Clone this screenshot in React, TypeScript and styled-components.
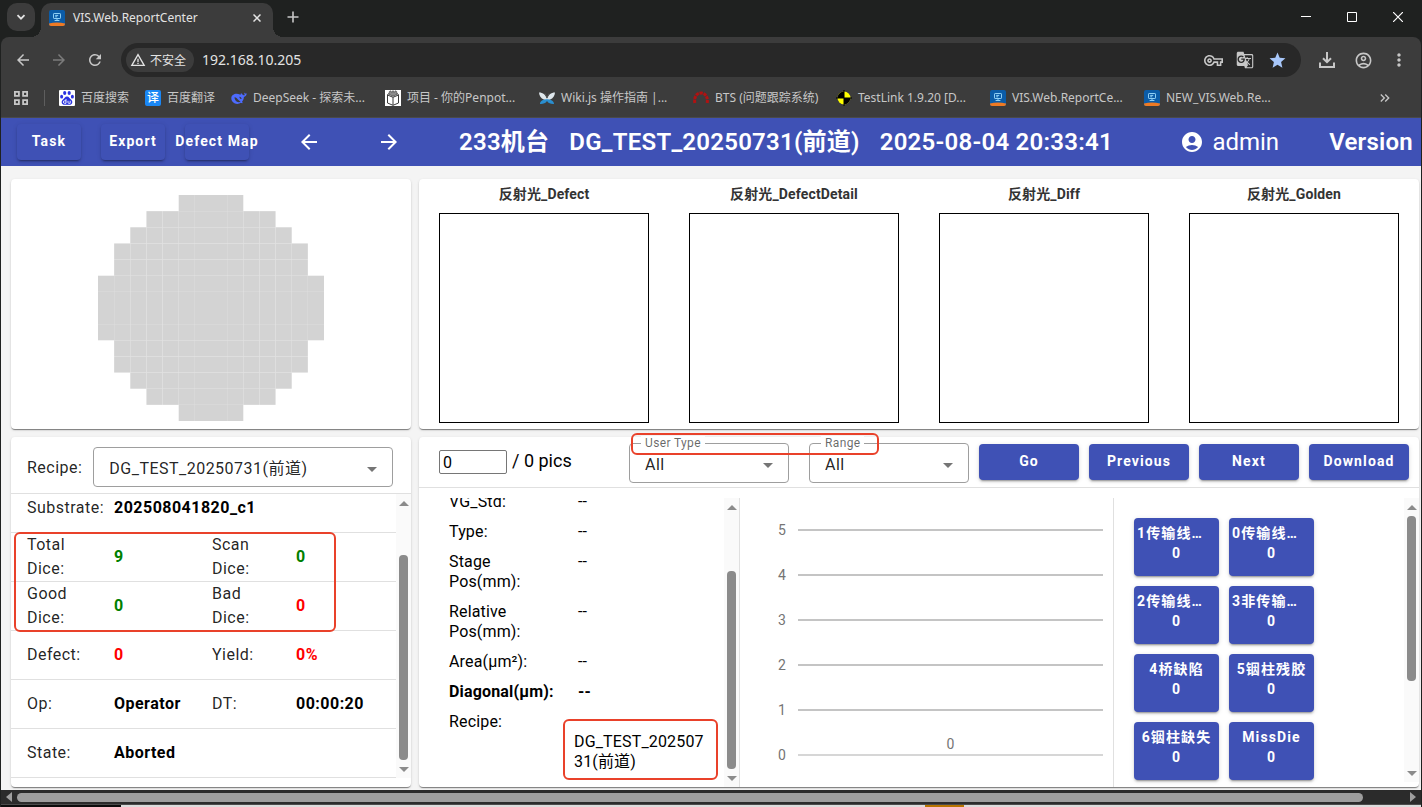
import React from "react";
import styled, { createGlobalStyle, css } from "styled-components";
import {
  MdAccountCircle,
  MdArrowBack,
  MdArrowDropDown,
  MdArrowForward,
  MdGTranslate,
  MdKeyboardDoubleArrowRight,
  MdMoreVert,
  MdOutlineAccountCircle,
  MdOutlineVpnKey,
  MdRefresh,
  MdStar,
  MdWarningAmber,
} from "react-icons/md";

const uiFont = `"Noto Sans", "Noto Sans CJK SC", sans-serif`;
const appFont = `Roboto, "Noto Sans CJK SC", sans-serif`;
const indigo = "#3f51b5";
const markRed = "#e9412a";
const bodySpacing = "0.03em";

const GlobalStyle = createGlobalStyle`
  *, *::before, *::after { box-sizing: border-box; }
  body { margin: 0; background: #232323; font-family: ${appFont}; }
  button, input, select { font-family: inherit; }
  button { cursor: pointer; }
  svg { display: block; flex: none; }
`;

/* ---------- browser window ---------- */

const Browser = styled.div`
  display: flex;
  flex-direction: column;
  min-height: 100vh;
  padding: 0 1px;
  background: #1f2120;
`;

const TabStrip = styled.div`
  display: flex;
  align-items: flex-end;
  height: 37px;
  padding-left: 6px;
  font-family: ${uiFont};
  color: #e3e3e3;
`;

const TabSearch = styled.button`
  display: grid;
  place-items: center;
  width: 28px;
  height: 28px;
  margin: 0 6px 6px 0;
  padding: 0;
  border: 0;
  border-radius: 10px;
  background: #3c3c3c;
  color: inherit;
`;

const Tab = styled.div`
  position: relative;
  display: flex;
  align-items: center;
  gap: 8px;
  width: 232px;
  height: 34px;
  padding: 0 8px 5px;
  border-radius: 10px 10px 0 0;
  background: #3c3c3c;
  font-size: 12px;
  line-height: 16px;

  &::before,
  &::after {
    content: "";
    position: absolute;
    bottom: 0;
    width: 10px;
    height: 10px;
  }
  &::before {
    left: -10px;
    background: radial-gradient(circle at 0 0, transparent 10px, #3c3c3c 10px);
  }
  &::after {
    right: -10px;
    background: radial-gradient(circle at 100% 0, transparent 10px, #3c3c3c 10px);
  }
`;

const TabTitle = styled.span`
  flex: 1;
  white-space: nowrap;
`;

const GlyphButton = styled.button<{ $w?: number; $h?: number; $dim?: boolean }>`
  display: grid;
  place-items: center;
  flex: none;
  width: ${(p) => p.$w ?? 36}px;
  height: ${(p) => p.$h ?? 34}px;
  padding: 0;
  border: 0;
  background: none;
  color: ${(p) => (p.$dim ? "#7b7b7b" : "#c7c7c7")};
`;

const NewTab = styled(GlyphButton)`
  margin: 0 0 3px 2px;
`;

const WindowButtons = styled.div`
  display: flex;
  margin-left: auto;
  align-self: flex-start;
  color: #fff;
`;

const Toolbar = styled.div`
  display: flex;
  align-items: center;
  height: 46px;
  padding: 0 4px;
  border-radius: 8px 8px 0 0;
  background: #3c3c3c;
`;

const AddressBar = styled.div`
  display: flex;
  align-items: center;
  flex: 1;
  height: 34px;
  margin: 0 8px;
  padding: 0 8px 0 5px;
  border-radius: 17px;
  background: #282828;
  font-family: ${uiFont};
`;

const SecurityChip = styled.button`
  display: flex;
  align-items: center;
  gap: 4px;
  height: 24px;
  margin-right: 8px;
  padding: 0 8px 0 4px;
  border: 0;
  border-radius: 12px;
  background: #3c3c3c;
  color: #e3e3e3;
  font-size: 12px;
`;

const AddressInput = styled.input`
  flex: 1;
  min-width: 0;
  padding: 0 0 2px;
  border: 0;
  outline: 0;
  background: none;
  color: #e3e3e3;
  font-size: 14px;
`;

const BookmarksBar = styled.nav`
  display: flex;
  align-items: center;
  height: 35px;
  padding: 0 20px 4px 10px;
  border-bottom: 1px solid #4a4a4a;
  background: #3c3c3c;
  font-family: ${uiFont};
`;

const BookmarkDivider = styled.span`
  width: 1px;
  height: 16px;
  margin: 0 14px 0 13px;
  background: #5e5e5e;
`;

const Bookmark = styled.a<{ $width: number }>`
  display: flex;
  align-items: center;
  gap: 6px;
  flex: none;
  width: ${(p) => p.$width}px;
  margin-right: 16px;
  color: #c7c7c7;
  font-size: 12px;
  line-height: 16px;
  text-decoration: none;
  white-space: nowrap;
`;

const Overflow = styled(GlyphButton)`
  margin-left: auto;
`;

/* ---------- application bar ---------- */

const AppBar = styled.header`
  display: flex;
  align-items: center;
  height: 48px;
  padding: 0 8px 0 16px;
  background: ${indigo};
  color: #fff;
`;

const raised = css`
  border: 0;
  border-radius: 4px;
  background: ${indigo};
  color: #fff;
  font-size: 14px;
  font-weight: 700;
  letter-spacing: 0.08em;
  box-shadow: 0 3px 1px -2px rgba(0, 0, 0, 0.2), 0 2px 2px rgba(0, 0, 0, 0.14),
    0 1px 5px rgba(0, 0, 0, 0.12);
`;

const BarButton = styled.button`
  ${raised}
  display: flex;
  align-items: center;
  justify-content: center;
  flex: none;
  width: 64px;
  height: 36px;
  margin-right: 20px;
  padding: 0 0 2px;
  white-space: nowrap;
`;

const BarIcon = styled.button`
  display: grid;
  place-items: center;
  flex: none;
  width: 40px;
  height: 40px;
  margin: 0 20px;
  padding: 0;
  border: 0;
  background: none;
  color: inherit;
`;

const Headline = styled.h1`
  display: flex;
  gap: 20px;
  margin: 0 0 0 30px;
  font-size: 24px;
  font-weight: 600;
  letter-spacing: 0.01em;
  line-height: 32px;
  white-space: nowrap;
`;

const Account = styled.div`
  display: flex;
  align-items: center;
  gap: 8px;
  margin-left: auto;
  font-size: 24px;
`;

const Version = styled.span`
  margin-left: 50px;
  font-size: 24px;
  font-weight: 600;
  letter-spacing: 0.01em;
`;

/* ---------- content ---------- */

const Content = styled.main`
  display: grid;
  grid-template-columns: 400px minmax(0, 1fr);
  grid-template-rows: 250px 350px;
  gap: 8px;
  padding: 13px 2px 3px 10px;
  background: #f4f4f4;
`;

const Card = styled.section`
  position: relative;
  display: flex;
  flex-direction: column;
  min-width: 0;
  border-radius: 4px;
  background: #fff;
  box-shadow: 0 2px 1px -1px rgba(0, 0, 0, 0.3), 0 1px 1px rgba(0, 0, 0, 0.2),
    0 1px 3px rgba(0, 0, 0, 0.12);
`;

const WaferCard = styled(Card)`
  align-items: center;
  justify-content: center;
  padding-top: 8px;
`;

const Gallery = styled(Card)`
  display: grid;
  grid-template-columns: repeat(4, 1fr);
`;

const Shot = styled.figure`
  display: flex;
  flex-direction: column;
  align-items: center;
  margin: 0;
  padding-top: 5px;
`;

const ShotTitle = styled.figcaption`
  height: 29px;
  color: #333;
  font-size: 14px;
  font-weight: 700;
  letter-spacing: 0.01em;
  line-height: 20px;
`;

const ShotFrame = styled.div`
  width: 210px;
  height: 210px;
  border: 1px solid #000;
`;

const RecipeBar = styled.div`
  display: flex;
  align-items: center;
  gap: 11px;
  height: 57px;
  padding: 4px 18px 0 16px;
  border-bottom: 1px solid #e0e0e0;
  color: rgba(0, 0, 0, 0.87);
  font-size: 16px;
  letter-spacing: ${bodySpacing};
`;

const Field = styled.div<{ $width?: number }>`
  position: relative;
  flex: ${(p) => (p.$width ? `0 0 ${p.$width}px` : 1)};
  height: 40px;

  svg {
    position: absolute;
    right: 9px;
    top: 10px;
    color: #757575;
    pointer-events: none;
  }
`;

const Select = styled.select`
  appearance: none;
  width: 100%;
  height: 40px;
  padding: 2px 32px 0 15px;
  border: 1px solid #9e9e9e;
  border-radius: 4px;
  background: #fff;
  color: rgba(0, 0, 0, 0.87);
  font-size: 16px;
  letter-spacing: ${bodySpacing};
`;

const FloatingLabel = styled.label`
  position: absolute;
  top: -7px;
  left: 12px;
  padding: 0 4px;
  background: #fff;
  color: rgba(0, 0, 0, 0.6);
  font-size: 12px;
  line-height: 14px;
  letter-spacing: ${bodySpacing};
`;

const ScrollArea = styled.div`
  display: flex;
  flex: 1;
  min-height: 0;
  margin-bottom: 9px;
  overflow: hidden;
`;

const Summary = styled.dl`
  display: flex;
  flex: 1;
  flex-direction: column;
  justify-content: flex-end;
  margin: 0;
  overflow: hidden;
`;

const SummaryRow = styled.div`
  display: grid;
  grid-template-columns: 87px 98px 84px 1fr;
  align-items: center;
  flex: none;
  height: 49px;
  padding-left: 16px;
  border-bottom: 1px solid #e0e0e0;
  font-size: 16px;
  letter-spacing: ${bodySpacing};
  line-height: 24px;
`;

const Term = styled.dt`
  padding-right: 18px;
  color: rgba(0, 0, 0, 0.87);
`;

const Value = styled.dd<{ $color?: string }>`
  margin: 0;
  color: ${(p) => p.$color ?? "#000"};
  font-weight: 700;
  white-space: nowrap;
`;

const Mark = styled.div<{ $x: number; $y: number; $w: number; $h: number }>`
  position: absolute;
  left: ${(p) => p.$x}px;
  top: ${(p) => p.$y}px;
  width: ${(p) => p.$w}px;
  height: ${(p) => p.$h}px;
  border: 2px solid ${markRed};
  border-radius: 6px;
  pointer-events: none;
`;

/* Spans the labels of both filters, so it is anchored to the right like they are. */
const FilterMark = styled.div`
  position: absolute;
  top: -4px;
  right: 540px;
  width: 248px;
  height: 22px;
  border: 2px solid ${markRed};
  border-radius: 6px;
  pointer-events: none;
`;

const FilterBar = styled.div`
  display: flex;
  align-items: center;
  gap: 10px;
  height: 51px;
  padding: 0 10px 0 20px;
  border-bottom: 1px solid #e0e0e0;
`;

const Pager = styled.label`
  display: flex;
  align-items: center;
  gap: 5px;
  flex: 1;
  font-size: 18px;
  line-height: 24px;
  white-space: nowrap;

  span {
    padding-bottom: 2px;
  }
`;

const PageInput = styled.input`
  width: 68px;
  height: 24px;
  padding: 0 3px;
  border: 1px solid #767676;
  border-radius: 2px;
  color: #000;
  font-size: 16px;
`;

const Filters = styled.div`
  display: flex;
  gap: 20px;
  padding-top: 2px;
`;

const ActionButton = styled.button`
  ${raised}
  flex: none;
  width: 100px;
  height: 36px;
  padding: 0 0 2px;
`;

const Detail = styled.div`
  display: grid;
  grid-template-columns: 321px minmax(0, 1fr) 305px;
  flex: 1;
  min-height: 0;
  padding-top: 10px;
`;

const DetailPane = styled.div`
  display: flex;
  min-height: 0;
  overflow: hidden;
  border-right: 1px solid #e0e0e0;
`;

const Attributes = styled.dl`
  display: flex;
  flex: 1;
  flex-direction: column;
  justify-content: flex-end;
  gap: 10px;
  margin: 0;
  padding: 0 0 15px 30px;
  overflow: hidden;
`;

const Attribute = styled.div<{ $bold?: boolean }>`
  display: grid;
  grid-template-columns: 110px 1fr;
  column-gap: 15px;
  flex: none;
  font-size: 16px;
  font-weight: ${(p) => (p.$bold ? 700 : 400)};
  letter-spacing: 0.01em;
  line-height: 20px;

  dt {
    white-space: pre-line;
  }
  dd {
    margin: 0;
    padding-left: 4px;
  }
`;

const MarkedValue = styled.dd`
  && {
    padding: 20px 0 0;
    white-space: pre-line;
  }
`;

const Chart = styled.div`
  display: flex;
  padding: 10px 10px 0 30px;
  border-right: 1px solid #e0e0e0;
`;

const Axis = styled.div`
  display: flex;
  flex-direction: column;
  width: 28px;
  color: #757575;
  font-size: 14px;
  line-height: 45px;

  span {
    width: 24px;
    text-align: center;
  }
`;

const Plot = styled.svg`
  flex: 1;
  min-width: 0;
  height: 270px;
`;

const TilePane = styled.div`
  display: flex;
  min-height: 0;
  padding-bottom: 5px;
`;

const Tiles = styled.div`
  display: grid;
  grid-template-columns: 85px 85px;
  grid-auto-rows: 58px;
  align-content: start;
  gap: 10px;
  flex: 1;
  padding: 20px 0 0 20px;
`;

const Tile = styled.button<{ $clipped?: boolean }>`
  ${raised}
  display: flex;
  flex-direction: column;
  align-items: center;
  padding: 5px 3px;
  line-height: 20px;
  white-space: nowrap;

  span:first-child {
    align-self: ${(p) => (p.$clipped ? "flex-start" : "center")};
  }
`;

/* ---------- scroll bars ---------- */

const Scroller = styled.div`
  display: flex;
  flex: none;
  flex-direction: column;
  align-items: center;
  width: 15px;
  background: #fafafa;
`;

const Arrow = styled.span<{ $dir: "up" | "down" }>`
  display: grid;
  place-items: center;
  width: 15px;
  height: 18px;

  &::before {
    content: "";
    border: 5px solid transparent;
    ${(p) => (p.$dir === "up" ? "border-top-width: 0; border-bottom-color: #8b8b8b;" : "")}
    ${(p) => (p.$dir === "down" ? "border-bottom-width: 0; border-top-color: #8b8b8b;" : "")}
  }
`;

const Track = styled.div`
  display: flex;
  flex: 1;
  flex-direction: column;
  width: 9px;
`;

const Thumb = styled.div<{ $grow: number }>`
  flex: ${(p) => p.$grow} 0 0;
  border-radius: 4px;
  background: #8b8b8b;
`;

const Gap = styled.div<{ $grow: number }>`
  flex: ${(p) => p.$grow} 0 0;
`;

const PageScroll = styled.div`
  display: flex;
  align-items: center;
  gap: 5px;
  height: 14px;
  padding: 0 5px;
  background: #2b2b2b;
  color: #9e9e9e;
`;

const PageTrack = styled.div`
  display: flex;
  flex: 1;
`;

const PageThumb = styled.div`
  width: 97%;
  height: 9px;
  border-radius: 5px;
  background: #9e9e9e;
`;

const Behind = styled.div`
  display: flex;
  height: 3px;
  overflow: hidden;
  background: #dcdcdc;
  border-top: 1px solid #4b4b4b;
`;

const BehindSide = styled.div`
  width: 120px;
  background: #0c0c0c;
`;

const BehindChip = styled.div`
  width: 39px;
  margin-left: 804px;
  background: #b87400;
`;

/* ---------- drawings ---------- */

const MonitorLogo = () => (
  <svg width="16" height="16" viewBox="0 0 16 16">
    <rect width="16" height="16" rx="2" fill="#0b5ca8" />
    <path d="M0 13.6Q8 11.6 16 13.6V14a2 2 0 0 1-2 2H2a2 2 0 0 1-2-2z" fill="#ee7a24" />
    <rect x="4.5" y="3.5" width="7" height="5" rx=".6" fill="none" stroke="#8fd0f5" />
    <path d="M6.2 5.4h3M6.2 6.8h2M8 8.6v1.6M5.6 10.5h4.8" stroke="#8fd0f5" fill="none" />
  </svg>
);

const PawLogo = () => (
  <svg width="16" height="16" viewBox="0 0 16 16">
    <rect width="16" height="16" rx="1" fill="#fff" />
    <g fill="#2932e1">
      <ellipse cx="5.7" cy="3" rx="1.6" ry="2.1" />
      <ellipse cx="10.2" cy="3" rx="1.6" ry="2.1" />
      <ellipse cx="2.6" cy="6.7" rx="1.5" ry="1.9" />
      <ellipse cx="13.4" cy="6.7" rx="1.5" ry="1.9" />
      <path d="M8 6.4c2 0 2.7 2 4.200 3.300 2.200 2 .9 5.300-1.900 5.100-1.600-.2-3-.2-4.600 0-2.800.2-4.100-3.100-1.900-5.100C5.300 8.400 6 6.400 8 6.400z" />
    </g>
    <path d="M7 9v4.300H5.600a1.200 1.200 0 0 1 0-2.500H7M9 10.800v1.700q0 .8.800.8h1.400v-2.500" stroke="#fff" fill="none" strokeWidth=".9" />
  </svg>
);

const TranslateBadge = styled.span`
  display: grid;
  place-items: center;
  flex: none;
  width: 16px;
  height: 16px;
  border-radius: 2px;
  background: #1a87f5;
  color: #fff;
  font-size: 12px;
  font-weight: 500;
`;

const WhaleLogo = () => (
  <svg width="16" height="16" viewBox="0 0 16 16">
    <path
      d="M15.700 3.300c-1 .5-1.500.3-2.300-.9-.3 1.300.2 2 .4 2.600-1 .6-2.200-.2-3.300-1.600-.4-.5-.9-.2-.7.3.4.9-.1 1-1 .7C5.400 2.700.3 3.900.3 8.300c0 3.400 3 5.600 5.900 5.600 1.500 0 2.700-.5 3.400-1.100.7.3 1.600.4 2.100.3.300-.5-.4-.9-.8-1.200 1.300-1.400 2-3.400 2-5 1.400 0 2.800-1.500 2.800-3.600z"
      fill="#4d6bfe"
    />
    <path d="M3.500 7.200c2 .1 2.900 1.600 4 2.900.7.900 1.400 1.500 2.100 1.700-1.800.9-4.100.2-5.200-1.500-.6-1-.9-2-.9-3.100zM8.400 6.800c1.200-.2 2.300 1 2.200 2.300-.9.200-2.200-.9-2.200-2.300z" fill="#3c3c3c" />
  </svg>
);

const BoxLogo = () => (
  <svg width="16" height="16" viewBox="0 0 16 16">
    <rect width="16" height="16" fill="#fff" />
    <path d="M2.500 5 8 7.300 13.500 5v8L8 15.300 2.500 13zM8 7.300v8M2.500 5 4 3.200M13.500 5 12 3.200" fill="none" stroke="#3a3a3a" />
    <path d="M4 4.500 4.300 1.500 5.800.8l1 1.700L8 .6l1.200 1.900 1-1.700 1.500.7.3 3L8 6.200z" fill="#8d8d8d" stroke="#3a3a3a" strokeWidth=".6" />
  </svg>
);

const ButterflyLogo = () => (
  <svg width="16" height="16" viewBox="0 0 16 16">
    <path d="M1 14c0-3 3-4.500 7-5.500 4 1 7 2.500 7 5.500-3 .2-5.500-.6-7-3-1.500 2.400-4 3.200-7 3z" fill="#2a8fd0" />
    <path d="M0 2.500c4 0 7 2.600 8 6.500 1-3.900 4-6.500 8-6.500-.2 3.200-1.800 6-5 7L8 9.200 5 9.500c-3.200-1-4.800-3.800-5-7z" fill="#dfe7ec" />
    <path d="M6 3.500 8 8l2-4.500" stroke="#555" fill="none" />
  </svg>
);

const ArcLogo = () => (
  <svg width="16" height="16" viewBox="0 0 16 16">
    <path d="M1.800 13C.8 6.500 4 3 8 3s7.200 3.500 6.200 10" fill="none" stroke="#b01212" strokeWidth="3" strokeDasharray="3.200 .8" />
  </svg>
);

const TargetLogo = () => (
  <svg width="16" height="16" viewBox="0 0 16 16">
    <circle cx="8" cy="8" r="6.500" fill="#ff0" />
    <path d="M8 8V1.500A6.500 6.500 0 0 0 1.500 8zM8 8v6.500A6.500 6.500 0 0 0 14.500 8z" fill="#000" />
    <path d="M8 0v16M0 8h16" stroke="#000" />
  </svg>
);

const waferInset = [5, 3, 2, 1, 1, 0, 0, 0, 0, 1, 1, 2, 3, 5];
const waferSize = 226;
const dieSize = waferSize / waferInset.length;

const WaferMap = () => (
  <svg width={waferSize} height={waferSize} role="img" aria-label="Wafer map">
    {waferInset.map((inset, row) =>
      Array.from({ length: 14 - inset * 2 }, (_, i) => (
        <rect
          key={`${row}-${i}`}
          x={(inset + i) * dieSize}
          y={row * dieSize}
          width={dieSize}
          height={dieSize}
          fill="#d3d3d3"
        />
      ))
    )}
  </svg>
);

/* ---------- data ---------- */

const bookmarks = [
  { icon: <PawLogo />, text: "百度搜索", width: 70 },
  { icon: <TranslateBadge>译</TranslateBadge>, text: "百度翻译", width: 70 },
  { icon: <WhaleLogo />, text: "DeepSeek - 探索未...", width: 138 },
  { icon: <BoxLogo />, text: "项目 - 你的Penpot...", width: 138 },
  { icon: <ButterflyLogo />, text: "Wiki.js 操作指南 |...", width: 138 },
  { icon: <ArcLogo />, text: "BTS (问题跟踪系统)", width: 127 },
  { icon: <TargetLogo />, text: "TestLink 1.9.20 [D...", width: 138 },
  { icon: <MonitorLogo />, text: "VIS.Web.ReportCe...", width: 138 },
  { icon: <MonitorLogo />, text: "NEW_VIS.Web.Re...", width: 138 },
];

type Pair = { term: string; value: string; color?: string };

const summary: Pair[][] = [
  [{ term: "Substrate:", value: "202508041820_c1" }],
  [
    { term: "Total Dice:", value: "9", color: "#008000" },
    { term: "Scan Dice:", value: "0", color: "#008000" },
  ],
  [
    { term: "Good Dice:", value: "0", color: "#008000" },
    { term: "Bad Dice:", value: "0", color: "#f00" },
  ],
  [
    { term: "Defect:", value: "0", color: "#f00" },
    { term: "Yield:", value: "0%", color: "#f00" },
  ],
  [
    { term: "Op:", value: "Operator" },
    { term: "DT:", value: "00:00:20" },
  ],
  [{ term: "State:", value: "Aborted" }],
];

const attributes = [
  { term: "VG_Std:" },
  { term: "Type:" },
  { term: "Stage\nPos(mm):" },
  { term: "Relative\nPos(mm):" },
  { term: "Area(µm²):" },
  { term: "Diagonal(µm):", bold: true },
];

const tiles = [
  { name: "1传输线…", clipped: true },
  { name: "0传输线…", clipped: true },
  { name: "2传输线…", clipped: true },
  { name: "3非传输…", clipped: true },
  { name: "4桥缺陷" },
  { name: "5铟柱残胶" },
  { name: "6铟柱缺失" },
  { name: "MissDie" },
];

const shots = ["Defect", "DefectDetail", "Diff", "Golden"];
const actions = ["Go", "Previous", "Next", "Download"];
const ticks = [5, 4, 3, 2, 1, 0];

/* ---------- parts ---------- */

const ScrollBar = ({ before, thumb, after }: { before: number; thumb: number; after: number }) => (
  <Scroller aria-hidden="true">
    <Arrow $dir="up" />
    <Track>
      <Gap $grow={before} />
      <Thumb $grow={thumb} />
      <Gap $grow={after} />
    </Track>
    <Arrow $dir="down" />
  </Scroller>
);

const FilterSelect = ({ id, label }: { id: string; label: string }) => (
  <Field $width={160}>
    <Select id={id}>
      <option>All</option>
    </Select>
    <FloatingLabel htmlFor={id}>{label}</FloatingLabel>
    <MdArrowDropDown size={24} />
  </Field>
);

const BrowserChrome = () => (
  <>
    <TabStrip>
      <TabSearch aria-label="Search tabs">
        <svg width="10" height="10" viewBox="0 0 10 10" fill="none" stroke="currentColor" strokeWidth="1.800">
          <path d="m1.500 3.200 3.500 3.500 3.500-3.500" />
        </svg>
      </TabSearch>
      <Tab>
        <MonitorLogo />
        <TabTitle>VIS.Web.ReportCenter</TabTitle>
        <GlyphButton $w={16} $h={16} aria-label="Close tab">
          <svg width="8" height="8" viewBox="0 0 8 8" stroke="#e3e3e3" strokeWidth="1.500">
            <path d="m.5.5 7 7m0-7-7 7" />
          </svg>
        </GlyphButton>
      </Tab>
      <NewTab aria-label="New tab">
        <svg width="12" height="12" viewBox="0 0 12 12" stroke="currentColor" strokeWidth="1.600">
          <path d="M6 .5v11M.5 6h11" />
        </svg>
      </NewTab>
      <WindowButtons>
        <GlyphButton $w={46} aria-label="Minimize">
          <svg width="10" height="10" viewBox="0 0 10 10" stroke="#fff">
            <path d="M0 4.500h10" />
          </svg>
        </GlyphButton>
        <GlyphButton $w={46} aria-label="Maximize">
          <svg width="10" height="10" viewBox="0 0 10 10" stroke="#fff" fill="none">
            <path d="M.5.5h9v9h-9z" />
          </svg>
        </GlyphButton>
        <GlyphButton $w={46} aria-label="Close">
          <svg width="10" height="10" viewBox="0 0 10 10" stroke="#fff" strokeWidth="1.200">
            <path d="m0 0 10 10M10 0 0 10" />
          </svg>
        </GlyphButton>
      </WindowButtons>
    </TabStrip>
    <Toolbar>
      <GlyphButton aria-label="Back">
        <MdArrowBack size={18} />
      </GlyphButton>
      <GlyphButton $dim aria-label="Forward">
        <MdArrowForward size={18} />
      </GlyphButton>
      <GlyphButton aria-label="Reload">
        <MdRefresh size={18} />
      </GlyphButton>
      <AddressBar>
        <SecurityChip>
          <MdWarningAmber size={16} />
          不安全
        </SecurityChip>
        <AddressInput aria-label="Address" defaultValue="192.168.10.205" />
        <GlyphButton $w={32} aria-label="Passwords">
          <MdOutlineVpnKey size={19} />
        </GlyphButton>
        <GlyphButton $w={32} aria-label="Translate">
          <MdGTranslate size={18} />
        </GlyphButton>
        <GlyphButton $w={32} aria-label="Bookmark">
          <MdStar size={19} color="#a8c7fa" />
        </GlyphButton>
      </AddressBar>
      <GlyphButton aria-label="Downloads">
        <svg width="16" height="16" viewBox="0 0 16 16" fill="none" stroke="currentColor" strokeWidth="2">
          <path d="M8 0v10M4 6.200l4 4 4-4M1 10.500V15h14v-4.500" />
        </svg>
      </GlyphButton>
      <GlyphButton aria-label="Profile">
        <MdOutlineAccountCircle size={19} />
      </GlyphButton>
      <GlyphButton aria-label="Menu">
        <MdMoreVert size={20} />
      </GlyphButton>
    </Toolbar>
    <BookmarksBar aria-label="Bookmarks">
      <GlyphButton $w={20} $h={20} aria-label="Apps">
        <svg width="14" height="14" viewBox="0 0 14 14" fill="none" stroke="currentColor" strokeWidth="1.800">
          <path d="M.9.9h4v4h-4zM9.100.9h4v4h-4zM.9 9.100h4v4h-4zM9.100 9.100h4v4h-4z" />
        </svg>
      </GlyphButton>
      <BookmarkDivider />
      {bookmarks.map((b) => (
        <Bookmark key={b.text} href="#" $width={b.width}>
          {b.icon}
          <span>{b.text}</span>
        </Bookmark>
      ))}
      <Overflow $w={32} $h={20} aria-label="More bookmarks">
        <MdKeyboardDoubleArrowRight size={16} />
      </Overflow>
    </BookmarksBar>
  </>
);

export default function App() {
  return (
    <Browser>
      <GlobalStyle />
      <BrowserChrome />
      <AppBar>
        <BarButton>Task</BarButton>
        <BarButton>Export</BarButton>
        <BarButton>Defect Map</BarButton>
        <BarIcon aria-label="Previous wafer">
          <MdArrowBack size={24} />
        </BarIcon>
        <BarIcon aria-label="Next wafer">
          <MdArrowForward size={24} />
        </BarIcon>
        <Headline>
          <span>233机台</span>
          <span>DG_TEST_20250731(前道)</span>
          <span>2025-08-04 20:33:41</span>
        </Headline>
        <Account>
          <MdAccountCircle size={24} />
          admin
        </Account>
        <Version>Version</Version>
      </AppBar>
      <Content>
        <WaferCard>
          <WaferMap />
        </WaferCard>
        <Gallery>
          {shots.map((name) => (
            <Shot key={name}>
              <ShotTitle>反射光_{name}</ShotTitle>
              <ShotFrame />
            </Shot>
          ))}
        </Gallery>
        <Card>
          <RecipeBar>
            <label htmlFor="recipe">Recipe:</label>
            <Field>
              <Select id="recipe">
                <option>DG_TEST_20250731(前道)</option>
              </Select>
              <MdArrowDropDown size={24} />
            </Field>
          </RecipeBar>
          <ScrollArea>
            <Summary>
              {summary.map((row) => (
                <SummaryRow key={row[0].term}>
                  {row.map((pair) => (
                    <React.Fragment key={pair.term}>
                      <Term>{pair.term}</Term>
                      <Value $color={pair.color}>{pair.value}</Value>
                    </React.Fragment>
                  ))}
                </SummaryRow>
              ))}
            </Summary>
            <ScrollBar before={43} thumb={205} after={0} />
          </ScrollArea>
          <Mark $x={3} $y={95} $w={322} $h={100} />
        </Card>
        <Card>
          <FilterBar>
            <Pager>
              <PageInput defaultValue="0" aria-label="Picture number" />
              <span>/ 0 pics</span>
            </Pager>
            <Filters>
              <FilterSelect id="user-type" label="User Type" />
              <FilterSelect id="range" label="Range" />
            </Filters>
            {actions.map((name) => (
              <ActionButton key={name}>{name}</ActionButton>
            ))}
          </FilterBar>
          <Detail>
            <DetailPane>
              <Attributes>
                {attributes.map((a) => (
                  <Attribute key={a.term} $bold={a.bold}>
                    <dt>{a.term}</dt>
                    <dd>--</dd>
                  </Attribute>
                ))}
                <Attribute>
                  <dt>Recipe:</dt>
                  <MarkedValue>{"DG_TEST_202507\n31(前道)"}</MarkedValue>
                </Attribute>
              </Attributes>
              <ScrollBar before={55} thumb={198} after={0} />
            </DetailPane>
            <Chart>
              <Axis>
                {ticks.map((t) => (
                  <span key={t}>{t}</span>
                ))}
              </Axis>
              <Plot role="img" aria-label="Defect count chart">
                {ticks.map((t, i) => (
                  <line
                    key={t}
                    x1="0"
                    x2="100%"
                    y1={22 + i * 45}
                    y2={22 + i * 45}
                    stroke={t ? "#c4c4c4" : "#d6d6d6"}
                    strokeWidth="2"
                  />
                ))}
                <text x="50%" y="241" textAnchor="middle" fontSize="14" fill="#757575">
                  0
                </text>
              </Plot>
            </Chart>
            <TilePane>
              <Tiles>
                {tiles.map((t) => (
                  <Tile key={t.name} $clipped={t.clipped}>
                    <span>{t.name}</span>
                    <span>0</span>
                  </Tile>
                ))}
              </Tiles>
              <ScrollBar before={0} thumb={165} after={83} />
            </TilePane>
          </Detail>
          <Mark $x={144} $y={282} $w={155} $h={61} />
          <FilterMark />
        </Card>
      </Content>
      <PageScroll aria-hidden="true">
        <svg width="6" height="10" viewBox="0 0 6 10" fill="currentColor">
          <path d="M6 0v10L0 5z" />
        </svg>
        <PageTrack>
          <PageThumb />
        </PageTrack>
        <svg width="6" height="10" viewBox="0 0 6 10" fill="currentColor">
          <path d="M0 0v10l6-5z" />
        </svg>
      </PageScroll>
      <Behind>
        <BehindSide />
        <BehindChip />
      </Behind>
    </Browser>
  );
}
